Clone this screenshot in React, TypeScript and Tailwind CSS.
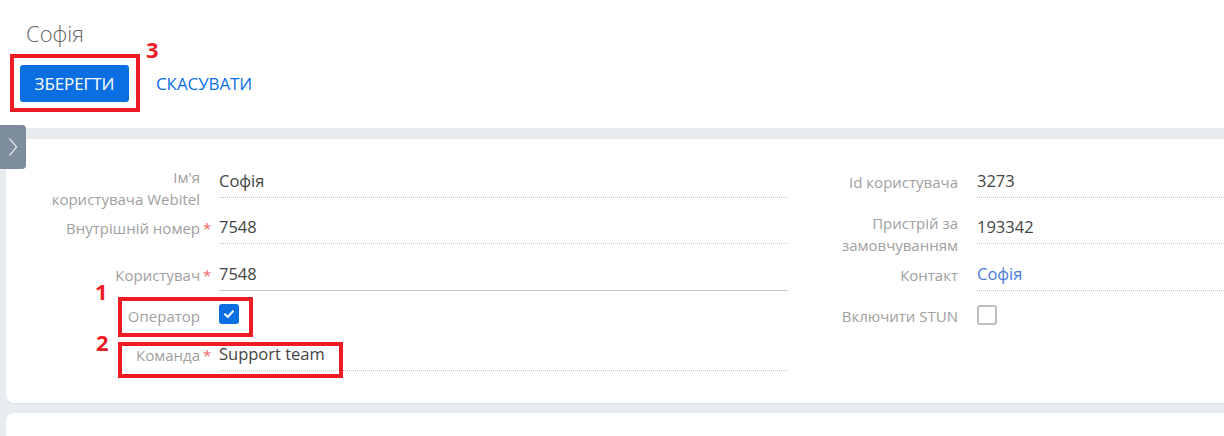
import { ReactNode } from "react";

const FONT = "font-['Open_Sans','Liberation_Sans',sans-serif]";

type FieldProps = {
  label: ReactNode;
  required?: boolean;
  multiline?: boolean;
  labelWidth: string;
  underline?: "dotted" | "solid" | "none";
  children: ReactNode;
};

function Field({ label, required, multiline, labelWidth, underline = "dotted", children }: FieldProps) {
  const line =
    underline === "dotted"
      ? "border-b border-dotted border-[#c4c4c4]"
      : underline === "solid"
        ? "border-b border-solid border-[#c9c9c9]"
        : "";
  return (
    <div className="flex h-[32px]">
      <div
        className={`${labelWidth} shrink-0 text-right text-[15px] text-[#a0a0a0] ${
          multiline ? "self-start leading-[22px]" : "self-center leading-[20px]"
        }`}
      >
        {label}
      </div>
      <div className="w-[19px] shrink-0 pl-[3px] self-center text-[15px] leading-[20px] text-[#f36b5e]">
        {required ? "*" : ""}
      </div>
      <div className={`flex-1 flex items-center text-[16.5px] text-[#444] ${line}`}>{children}</div>
    </div>
  );
}

function Checkbox({ checked }: { checked?: boolean }) {
  if (checked) {
    return (
      <span className="mb-[4px] flex size-[20px] items-center justify-center rounded-[3px] bg-[#0b6fe2]">
        <svg viewBox="0 0 12 12" className="size-[12px]">
          <path d="M2 6.3 L4.8 9 L10 3.2" fill="none" stroke="white" strokeWidth="2" strokeLinecap="round" strokeLinejoin="round" />
        </svg>
      </span>
    );
  }
  return <span className="mb-[2px] size-[20px] rounded-[3px] border-2 border-[#bdbdbd] bg-white" />;
}

export default function App() {
  return (
    <div className={`relative h-[436px] w-[1224px] overflow-hidden bg-[#e8ecee] ${FONT}`}>
      {/* Шапка */}
      <div className="h-[128px] bg-white px-[20px] pt-[18px]">
        <h1 className="ml-[6px] text-[22px] font-light leading-[30px] text-[#666]">Софія</h1>
        <div className="mt-[17px] flex items-center">
          <button className="h-[37px] w-[109px] rounded-[3px] bg-[#0b6fe2] text-[17px] font-medium tracking-[-0.1px] text-white">
            ЗБЕРЕГТИ
          </button>
          <button className="ml-[27px] text-[17px] tracking-[-0.1px] text-[#0b6fe2]">СКАСУВАТИ</button>
        </div>
      </div>

      {/* Картка з полями */}
      <div className="ml-[6px] mt-[11px] h-[264px] rounded-l-[8px] bg-white pt-[27px] shadow-[0_1px_0_#dcdfe1]">
        <div className="flex">
          <div className="w-[782px] shrink-0 flex flex-col">
            <Field label={<>Ім'я<br />користувача Webitel</>} multiline labelWidth="w-[194px]">
              Софія
            </Field>
            <div className="mt-[14px]">
              <Field label="Внутрішній номер" required labelWidth="w-[194px]">7548</Field>
            </div>
            <div className="mt-[15px]">
              <Field label="Користувач" required labelWidth="w-[194px]" underline="solid">7548</Field>
            </div>
            <div className="mt-[9px]">
              <Field label="Оператор" labelWidth="w-[194px]" underline="none">
                <Checkbox checked />
              </Field>
            </div>
            <div className="mt-[7px]">
              <Field label="Команда" required labelWidth="w-[194px]">Support team</Field>
            </div>
          </div>
          <div className="flex-1 flex flex-col">
            <Field label="Id користувача" labelWidth="w-[170px]">3273</Field>
            <div className="mt-[14px]">
              <Field label={<>Пристрій за<br />замовчуванням</>} multiline labelWidth="w-[170px]">193342</Field>
            </div>
            <div className="mt-[15px]">
              <Field label="Контакт" labelWidth="w-[170px]">
                <span className="text-[#4a7ddb]">Софія</span>
              </Field>
            </div>
            <div className="mt-[9px]">
              <Field label="Включити STUN" labelWidth="w-[170px]" underline="none">
                <Checkbox />
              </Field>
            </div>
          </div>
        </div>
      </div>

      {/* Наступна картка */}
      <div className="ml-[6px] mt-[10px] h-[40px] rounded-l-[8px] bg-white" />

      {/* Кнопка згортання панелі */}
      <div className="absolute left-0 top-[125px] flex h-[44px] w-[26px] items-center justify-center rounded-r-[4px] bg-[#7d8d9d]">
        <svg viewBox="0 0 10 20" className="h-[20px] w-[10px]">
          <path d="M1.5 1.5 L8.5 10 L1.5 18.5" fill="none" stroke="white" strokeWidth="1.1" />
        </svg>
      </div>

      {/* Анотації */}
      <div className="absolute left-[10px] top-[54px] h-[58px] w-[130px] border-4 border-[#ed1c24]" />
      <div className="absolute left-[146px] top-[36px] text-[22px] font-bold leading-[26px] text-[#ed1c24]">3</div>
      <div className="absolute left-[118px] top-[297px] h-[40px] w-[135px] border-4 border-[#ed1c24]" />
      <div className="absolute left-[95px] top-[278px] text-[22px] font-bold leading-[26px] text-[#ed1c24]">1</div>
      <div className="absolute left-[118px] top-[342px] h-[36px] w-[225px] border-4 border-[#ed1c24]" />
      <div className="absolute left-[96px] top-[329px] text-[22px] font-bold leading-[26px] text-[#ed1c24]">2</div>
    </div>
  );
}
